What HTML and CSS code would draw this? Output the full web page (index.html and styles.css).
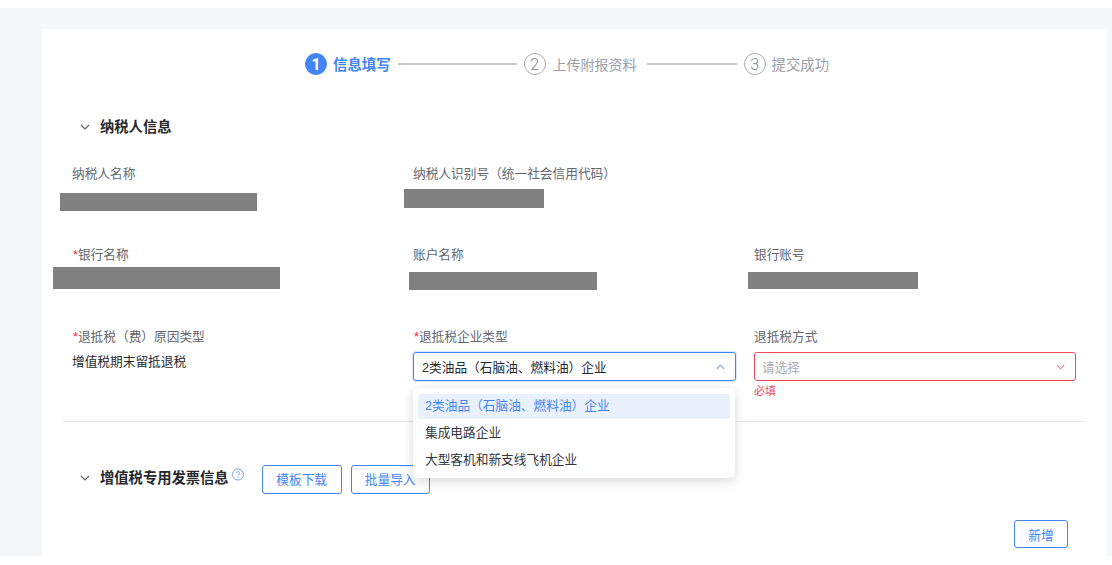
FILE: index.html
```html
<!DOCTYPE html>
<html lang="zh-CN">
<head>
<meta charset="utf-8">
<title>信息填写</title>
<link rel="stylesheet" href="styles.css">
</head>
<body>
<div class="page">
  <main class="panel">
    <ol class="steps">
      <li class="step active"><span class="num">1</span><span class="step-text">信息填写</span><span class="line line-a"></span></li>
      <li class="step"><span class="num">2</span><span class="step-text">上传附报资料</span><span class="line line-b"></span></li>
      <li class="step step-last"><span class="num">3</span><span class="step-text">提交成功</span></li>
    </ol>

    <section class="section">
      <h2 class="section-head">
        <svg class="caret" viewBox="0 0 10 6" width="10" height="6"><path d="M1 1l4 4 4-4" fill="none" stroke="#5c6066" stroke-width="1.2"/></svg>
        <span>纳税人信息</span>
      </h2>
      <div class="row row-1">
        <div class="field">
          <div class="label">纳税人名称</div>
          <div class="mask mask-name"></div>
        </div>
        <div class="field">
          <div class="label">纳税人识别号（统一社会信用代码）</div>
          <div class="mask mask-id"></div>
        </div>
      </div>
      <div class="row row-2">
        <div class="field">
          <div class="label"><i class="req">*</i>银行名称</div>
          <div class="mask mask-bank"></div>
        </div>
        <div class="field">
          <div class="label">账户名称</div>
          <div class="mask mask-acct"></div>
        </div>
        <div class="field">
          <div class="label">银行账号</div>
          <div class="mask mask-no"></div>
        </div>
      </div>
      <div class="row row-3">
        <div class="field">
          <div class="label"><i class="req">*</i>退抵税（费）原因类型</div>
          <div class="value">增值税期末留抵退税</div>
        </div>
        <div class="field">
          <div class="label"><i class="req">*</i>退抵税企业类型</div>
          <div class="select open">
            <span>2类油品（石脑油、燃料油）企业</span>
            <svg class="arrow" viewBox="0 0 10 6" width="9" height="6"><path d="M1 5l4-4 4 4" fill="none" stroke="#6f9ff5" stroke-width="1.2"/></svg>
            <ul class="menu">
              <li class="selected">2类油品（石脑油、燃料油）企业</li>
              <li>集成电路企业</li>
              <li>大型客机和新支线飞机企业</li>
            </ul>
          </div>
        </div>
        <div class="field">
          <div class="label">退抵税方式</div>
          <div class="select error">
            <span class="placeholder">请选择</span>
            <svg class="arrow" viewBox="0 0 10 6" width="9" height="6"><path d="M1 1l4 4 4-4" fill="none" stroke="#ee7480" stroke-width="1.2"/></svg>
          </div>
          <div class="err-text">必填</div>
        </div>
      </div>
    </section>

    <hr class="divider">

    <section class="section">
      <div class="section-head invoice-head">
        <svg class="caret" viewBox="0 0 10 6" width="10" height="6"><path d="M1 1l4 4 4-4" fill="none" stroke="#5c6066" stroke-width="1.2"/></svg>
        <h2 class="invoice-title">增值税专用发票信息</h2>
        <svg class="help" viewBox="0 0 13 13" width="12" height="13"><circle cx="6.5" cy="6.5" r="6" fill="none" stroke="#6f9ff5"/><path d="M4.8 5.1c0-2.2 3.5-2.2 3.5-.1 0 1.3-1.8 1.4-1.8 2.9" fill="none" stroke="#6f9ff5"/><circle cx="6.5" cy="9.7" r=".6" fill="#6f9ff5"/></svg>
        <button class="btn btn-tpl">模板下载</button>
        <button class="btn btn-imp">批量导入</button>
      </div>
      <div class="actions"><button class="btn btn-add">新增</button></div>
    </section>
  </main>
</div>
</body>
</html>
```
FILE: styles.css
```css
* { box-sizing: border-box; }
html, body { margin: 0; padding: 0; height: 565px; overflow: hidden; background: #fff; }
body { font-family: "Liberation Sans", "Noto Sans CJK SC", sans-serif; font-size: 12.7px; color: #33363b; }
.page { margin-top: 8px; height: 548px; padding: 21px 5px 0 42px; background: #f6f7f9; }
.panel { height: 527px; background: #fff; padding-top: 23px; overflow: hidden; position: relative; }

.steps { list-style: none; margin: 0; padding: 0 0 0 263px; display: flex; align-items: center; height: 24px; }
.step { display: flex; align-items: center; color: #9b9ea3; font-size: 14px; }
.num { width: 22px; height: 22px; border-radius: 50%; border: 1px solid #a9abae; display: flex; align-items: center; justify-content: center; font-family: Roboto, sans-serif; font-size: 16px; font-weight: 300; color: #85888c; }
.step-text { margin-left: 7px; line-height: 22px; padding-top: 1px; }
.step-last .step-text { margin-left: 6px; font-size: 14.4px; }
.active .num { background: #4285f4; border-color: #4285f4; color: #fff; font-weight: 700; }
.active .step-text { color: #4285f4; font-weight: 700; margin-left: 6px; font-size: 14.4px; }
.line { display: block; height: 2px; background: #c8c8c8; margin: 0 7px; }
.line-a { width: 119px; }
.line-b { width: 90px; margin-left: 10px; }

.section-head { margin: 0; display: flex; align-items: center; font-size: 14.3px; font-weight: 700; color: #26282c; line-height: 20px; }
.section > .section-head { padding-left: 38px; }
.section > h2.section-head { margin-top: 41px; }
.caret { margin-right: 10px; flex: none; }
.row { display: grid; grid-template-columns: 341px 341px 322px; padding-left: 30px; }
.row-1 { margin-top: 27px; height: 81px; }
.row-2 { height: 82px; }
.row-3 { height: 94px; }
.label { line-height: 20px; color: #62666c; }
.req { color: #f5222d; font-style: normal; margin-left: 1px; }
.value { margin-top: 5px; line-height: 20px; color: #26282c; }

.mask { height: 18px; background: #808080; }
.mask-name { width: 197px; margin: 9px 0 0 -12px; }
.mask-id { width: 140px; height: 19px; margin: 5px 0 0 -9px; }
.mask-bank { width: 227px; height: 22px; margin: 2px 0 0 -19px; }
.mask-acct { width: 188px; margin: 7px 0 0 -4px; }
.mask-no { width: 170px; height: 17px; margin: 7px 0 0 -6px; }

.select { position: relative; width: 323px; height: 29px; margin-top: 5px; border: 1px solid #d9d9d9; border-radius: 3px; display: flex; align-items: center; justify-content: space-between; padding: 0 10px 0 8px; color: #26282c; background: #fff; }
.select.open { border-color: #4285f4; box-shadow: 0 0 0 1px #dbe8fd; }
.select.error { border-color: #ee4a5c; width: 322px; padding: 0 10px 0 7px; }
.placeholder { color: #a8abb0; }
.err-text { color: #ee4a5c; font-size: 11px; line-height: 14px; margin-top: 3px; }

.menu { position: absolute; z-index: 5; left: -1px; top: 35px; width: 322px; margin: 0; padding: 6px 5px 5px; list-style: none; background: #fff; border-radius: 6px; box-shadow: 0 3px 12px rgba(0, 0, 0, .16); }
.menu li { height: 25px; line-height: 25px; padding-left: 7px; margin-bottom: 2px; border-radius: 2px; color: #33363b; }
.menu li:last-child { margin-bottom: 0; }
.menu li.selected { background: #eaf1fe; color: #4285f4; }

.divider { margin: 0 0 0 21px; width: 1023px; border: 0; border-top: 1px solid #e8e8e8; }
.invoice-head { margin-top: 41px; height: 30px; }
.invoice-title { margin: 0; font: inherit; }
.help { margin: -7px 0 0 3px; flex: none; }
.btn { height: 29px; border: 1px solid #4285f4; border-radius: 3px; background: #fff; color: #4285f4; font: inherit; font-size: 12.7px; font-weight: 400; padding: 0; }
.btn-tpl { width: 80px; margin: 3px 0 0 18px; }
.btn-imp { width: 79px; margin: 3px 0 0 9px; }
.actions { display: flex; justify-content: flex-end; padding-right: 39px; margin-top: 27px; }
.btn-add { width: 54px; height: 28px; }
```
